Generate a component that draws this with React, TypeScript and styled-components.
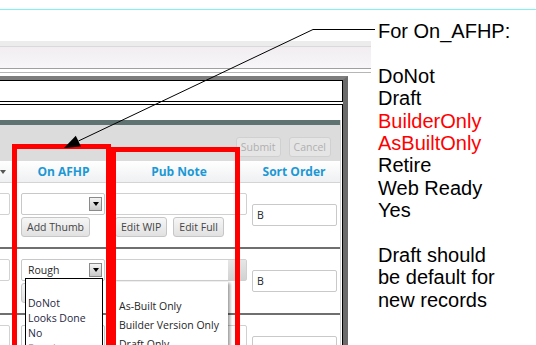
import React from 'react';
import styled, { createGlobalStyle } from 'styled-components';

const GlobalStyle = createGlobalStyle`
  html, body {
    margin: 0;
    padding: 0;
    background: #fff;
  }
  body {
    width: 536px;
    height: 345px;
    overflow: hidden;
    font-family: "Open Sans", "Noto Sans", sans-serif;
  }
  * { box-sizing: border-box; }
`;

const COLS = '17px 93px 138px 92px';

const Page = styled.div`
  position: relative;
  width: 536px;
  height: 345px;
  overflow: hidden;
`;

const TopRule = styled.div`
  height: 10px;
  border-bottom: 1px solid #80f2f2;
`;

const Body = styled.div`
  display: flex;
  align-items: flex-start;
`;

const LeftPane = styled.div`
  flex: none;
  width: 371px;
  padding-top: 31px;
`;

const AppBar = styled.div`
  height: 28px;
  border-top: 5px solid #ececec;
  border-bottom: 1px solid #a0a0a0;
  background: linear-gradient(#d9d9d9 0 1px, #f1edf1 1px, #f8f6f8);
`;

const SubRule = styled.div`
  margin: 3px 0;
  border-top: 1px solid #b6b6b6;
`;

const Frame = styled.div`
  width: 348px;
  border-top: 4px solid #7d7d7d;
  border-right: 5px solid #6b6b6b;
`;

const FilterBox = styled.div`
  height: 22px;
  border: 1px solid #000;
  border-left: none;
  margin-bottom: 2px;
`;

const GridBox = styled.div`
  border: 1px solid #000;
  border-left: none;
  border-bottom: none;
  padding: 15px 1px 0 0;
`;

const Grid = styled.div`
  border-right: 1px solid #d0d0d0;
`;

const TealBar = styled.div`
  height: 5px;
  background: #5f7373;
`;

const Toolbar = styled.div`
  height: 36px;
  background: #dcdcdc;
  display: flex;
  justify-content: flex-end;
  align-items: flex-start;
  gap: 8px;
  padding: 12px 9px 0 0;
`;

const ToolButton = styled.button`
  height: 20px;
  padding: 0 4px;
  border: 1px solid #d0d0d0;
  border-radius: 3px;
  background: #e5e5e5;
  color: #b0b0b0;
  font-family: "Open Sans", sans-serif;
  font-size: 10.5px;
  line-height: 18px;
`;

const HeaderRow = styled.div`
  display: grid;
  grid-template-columns: ${COLS};
  height: 22px;
  border-bottom: 1px solid #d4d4d4;
  background: linear-gradient(#ffffff, #eff0f2);
`;

const HeaderCell = styled.div`
  font-size: 12px;
  font-weight: 700;
  line-height: 21px;
  color: #1b98d5;
  text-align: center;
  white-space: nowrap;
`;

const SortCaret = styled.div`
  width: 0;
  height: 0;
  margin: 9px 0 0 0;
  border-left: 3.5px solid transparent;
  border-right: 3.5px solid transparent;
  border-top: 4px solid #555;
`;

const Row = styled.div`
  display: grid;
  grid-template-columns: ${COLS};
  height: 66px;
  border-bottom: 2px solid #6f6f6f;
`;

const PrevCell = styled.div`
  overflow: hidden;
  padding-top: 10px;
`;

const PartialField = styled.div`
  width: 48px;
  height: 22px;
  margin-left: -38px;
  border: 1px solid #d2d2d2;
  border-radius: 2px;
`;

const AfhpCell = styled.div`
  padding: 10px 0 0 4px;
`;

const PubCell = styled.div`
  padding: 10px 0 0 3px;
`;

const SortCell = styled.div`
  padding-left: 4px;
  align-self: center;
`;

const SelectWrap = styled.div`
  position: relative;
  width: 84px;
`;

const Select = styled.div`
  height: 22px;
  display: flex;
  align-items: center;
  padding: 0 2px 0 6px;
  border: 1px solid #c8c8c8;
  border-radius: 2px;
  background: #fff;
  font-size: 10.5px;
  color: #2a2a2a;
`;

const DropBtn = styled.div`
  margin-left: auto;
  width: 13px;
  height: 14px;
  border: 1px solid #8a8a8a;
  background: linear-gradient(#f4f4f4, #c9c9c9);
  display: flex;
  align-items: center;
  justify-content: center;

  &::after {
    content: "";
    border-left: 3.5px solid transparent;
    border-right: 3.5px solid transparent;
    border-top: 4px solid #000;
  }
`;

const Button = styled.button<{ $w?: number }>`
  height: 20px;
  padding: 0 5px;
  ${(p) => (p.$w ? `width: ${p.$w}px;` : '')}
  border: 1px solid #c6c6c6;
  border-radius: 3px;
  background: linear-gradient(#f6f6f6, #e1e1e1);
  color: #454545;
  font-family: "Open Sans", sans-serif;
  font-size: 10.5px;
  line-height: 18px;
  white-space: nowrap;
`;

const CellButtons = styled.div<{ $inset?: number }>`
  display: flex;
  gap: 6px;
  margin-top: 2px;
  padding-left: ${(p) => p.$inset || 0}px;
`;

const ComboWrap = styled.div`
  position: relative;
  width: 134px;
`;

const Combo = styled.div`
  height: 22px;
  display: flex;
  justify-content: flex-end;
  border: 1px solid #d0d0d0;
  border-radius: 2px;
  background: #fff;
`;

const ComboArrow = styled.div<{ $open?: boolean }>`
  width: 18px;
  display: flex;
  align-items: center;
  justify-content: center;
  background: ${(p) => (p.$open ? 'linear-gradient(#e6e6e6, #d2d2d2)' : 'transparent')};

  &::after {
    content: "";
    border-left: 2px solid transparent;
    border-right: 2px solid transparent;
    border-top: 3px solid #555;
  }
`;

const SortInput = styled.div`
  width: 85px;
  height: 22px;
  padding-left: 4px;
  border: 1px solid #c9c9c9;
  border-radius: 2px;
  font-size: 10.5px;
  line-height: 20px;
  color: #222;
`;

const AfhpList = styled.div`
  position: absolute;
  z-index: 3;
  left: 4px;
  top: 19px;
  width: 78px;
  height: 80px;
  border: 1px solid #000;
  background: #fff;
  padding-top: 17px;
`;

const AfhpItem = styled.div<{ $muted?: boolean }>`
  height: 15px;
  padding-left: 2px;
  font-size: 10.5px;
  line-height: 15px;
  color: ${(p) => (p.$muted ? '#a0a0a0' : '#1f2844')};
  white-space: nowrap;
`;

const PubList = styled.div`
  position: absolute;
  z-index: 3;
  left: 0;
  top: 23px;
  width: 115px;
  height: 90px;
  background: #fff;
  padding-top: 15px;
  box-shadow: 2px 1px 3px rgba(0, 0, 0, 0.4);
`;

const PubItem = styled.div`
  height: 19px;
  padding-left: 6px;
  font-size: 10.5px;
  line-height: 19px;
  color: #262626;
  white-space: nowrap;
`;

const Notes = styled.div`
  padding: 10px 0 0 7px;
  font-family: "Liberation Sans", Arial, sans-serif;
  font-size: 20px;
  line-height: 22.4px;
  color: #000;
  white-space: nowrap;
`;

const NoteLine = styled.div<{ $red?: boolean }>`
  min-height: 22.4px;
  color: ${(p) => (p.$red ? '#ff0000' : '#000')};
`;

const Callout = styled.div<{ $left: number; $top: number; $width: number }>`
  position: absolute;
  z-index: 5;
  left: ${(p) => p.$left}px;
  top: ${(p) => p.$top}px;
  width: ${(p) => p.$width}px;
  height: 260px;
  border: 5px solid #ff0000;
`;

const Leader = styled.svg`
  position: absolute;
  z-index: 6;
  left: 0;
  top: 0;
  pointer-events: none;
`;

type RowData = {
  afhp: string;
  sort: string;
  afhpOpen?: boolean;
  pubOpen?: boolean;
};

const rows: RowData[] = [
  { afhp: '', sort: 'B' },
  { afhp: 'Rough', sort: 'B', afhpOpen: true, pubOpen: true },
  { afhp: '', sort: '' },
];

const afhpOptions = ['DoNot', 'Looks Done', 'No'];
const pubOptions = ['As-Built Only', 'Builder Version Only', 'Draft Only'];

const notes: { text: string; red?: boolean }[] = [
  { text: 'For On_AFHP:' },
  { text: '' },
  { text: 'DoNot' },
  { text: 'Draft' },
  { text: 'BuilderOnly', red: true },
  { text: 'AsBuiltOnly', red: true },
  { text: 'Retire' },
  { text: 'Web Ready' },
  { text: 'Yes' },
  { text: '' },
  { text: 'Draft should' },
  { text: 'be default for' },
  { text: 'new records' },
];

export default function App() {
  return (
    <>
      <GlobalStyle />
      <Page>
        <TopRule />
        <Body>
          <LeftPane>
            <AppBar />
            <SubRule />
            <Frame>
              <FilterBox />
              <GridBox>
                <Grid>
                  <TealBar />
                  <Toolbar>
                    <ToolButton disabled>Submit</ToolButton>
                    <ToolButton disabled>Cancel</ToolButton>
                  </Toolbar>
                  <HeaderRow>
                    <HeaderCell><SortCaret /></HeaderCell>
                    <HeaderCell>On AFHP</HeaderCell>
                    <HeaderCell>Pub Note</HeaderCell>
                    <HeaderCell>Sort Order</HeaderCell>
                  </HeaderRow>
                  {rows.map((r, i) => {
                    // buttons under an open list are covered, so they carry no label
                    const covered = r.afhpOpen || r.pubOpen;
                    return (
                      <Row key={i}>
                        <PrevCell><PartialField /></PrevCell>
                        <AfhpCell>
                          <SelectWrap>
                            <Select>
                              {r.afhp}
                              <DropBtn />
                            </Select>
                            {r.afhpOpen && (
                              <AfhpList>
                                {afhpOptions.map((o) => (
                                  <AfhpItem key={o}>{o}</AfhpItem>
                                ))}
                                <AfhpItem $muted>Rough</AfhpItem>
                              </AfhpList>
                            )}
                          </SelectWrap>
                          <CellButtons>
                            {covered ? <Button $w={67} /> : <Button>Add Thumb</Button>}
                          </CellButtons>
                        </AfhpCell>
                        <PubCell>
                          <ComboWrap>
                            <Combo>
                              <ComboArrow $open={r.pubOpen} />
                            </Combo>
                            {r.pubOpen && (
                              <PubList>
                                {pubOptions.map((o) => (
                                  <PubItem key={o}>{o}</PubItem>
                                ))}
                              </PubList>
                            )}
                          </ComboWrap>
                          <CellButtons $inset={2}>
                            {covered ? (
                              <>
                                <Button $w={48} />
                                <Button $w={50} />
                              </>
                            ) : (
                              <>
                                <Button>Edit WIP</Button>
                                <Button>Edit Full</Button>
                              </>
                            )}
                          </CellButtons>
                        </PubCell>
                        <SortCell>
                          <SortInput>{r.sort}</SortInput>
                        </SortCell>
                      </Row>
                    );
                  })}
                </Grid>
              </GridBox>
            </Frame>
          </LeftPane>
          <Notes>
            {notes.map((n, i) => (
              <NoteLine key={i} $red={n.red}>{n.text}</NoteLine>
            ))}
          </Notes>
        </Body>
        <Callout $left={12} $top={144} $width={99} />
        <Callout $left={111} $top={147} $width={129} />
        <Leader width="536" height="345" viewBox="0 0 536 345">
          <polyline points="375,29.5 313,29.5 78.4,141" fill="none" stroke="#000" strokeWidth="1" />
          <polygon points="64,148 75.8,135.7 81,146.5" fill="#000" />
        </Leader>
      </Page>
    </>
  );
}
